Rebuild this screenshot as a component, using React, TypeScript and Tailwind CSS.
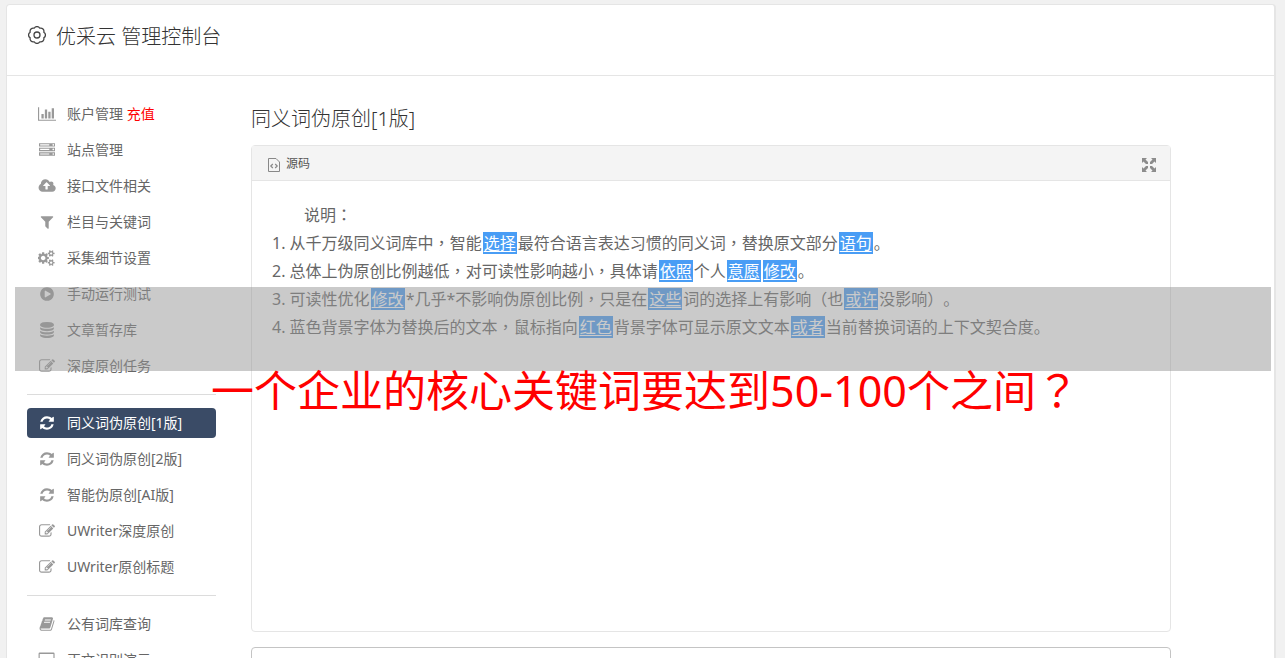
import React from "react";

interface IconShape {
  box: number;
  d: string;
}

const icons: Record<string, IconShape> = {
  chart: {
    box: 2048,
    d: "M640 896v512h-256v-512h256zm384-512v1024h-256v-1024h256zm1024 1152v128h-2048v-1536h128v1408h1920zm-640-896v768h-256v-768h256zm384-384v1152h-256v-1152h256z",
  },
  server: {
    box: 1792,
    d: "M128 1408h1024v-128h-1024v128zm0-512h1024v-128h-1024v128zm1568 448q0-40-28-68t-68-28-68 28-28 68 28 68 68 28 68-28 28-68zm-1568-960h1024v-128h-1024v128zm1568 448q0-40-28-68t-68-28-68 28-28 68 28 68 68 28 68-28 28-68zm0-512q0-40-28-68t-68-28-68 28-28 68 28 68 68 28 68-28 28-68zm96 832v384h-1792v-384h1792zm0-512v384h-1792v-384h1792zm0-512v384h-1792v-384h1792z",
  },
  cloud: {
    box: 2048,
    d: "M1344 864q0-14-9-23l-352-352q-9-9-23-9t-23 9l-351 351q-10 12-10 24 0 14 9 23t23 9h224v352q0 13 9.5 22.5t22.5 9.5h192q13 0 22.5-9.5t9.5-22.5v-352h224q13 0 22.5-9.5t9.5-22.5zm640 288q0 159-112.5 271.5t-271.5 112.5h-1088q-185 0-316.5-131.5t-131.5-316.5q0-130 70-240t188-165q-2-30-2-43 0-212 150-362t362-150q156 0 285.5 87t188.5 231q71-62 166-62 106 0 181 75t75 181q0 76-41 138 130 31 213.5 135.5t83.5 238.5z",
  },
  filter: {
    box: 1792,
    d: "M1595 295q17 41-14 70l-493 493v742q0 42-39 59-13 5-25 5-27 0-45-19l-256-256q-19-19-19-45v-486l-493-493q-31-29-14-70 17-39 59-39h1280q42 0 59 39z",
  },
  cogs: {
    box: 1920,
    d: "M832 896q0-106-75-181t-181-75-181 75-75 181 75 181 181 75 181-75 75-181zm768 512q0-52-38-90t-90-38-90 38-38 90q0 53 37.5 90.5t90.5 37.5 90.5-37.5 37.5-90.5zm0-1024q0-52-38-90t-90-38-90 38-38 90q0 53 37.5 90.5t90.5 37.5 90.5-37.5 37.5-90.5zm-384 421v185q0 10-7 19.5t-16 10.5l-155 24q-11 35-32 76 34 48 90 115 7 11 7 20 0 12-7 19-23 30-82.5 89.5t-78.5 59.5q-11 0-21-7l-115-90q-37 19-77 31-11 108-23 155-7 24-30 24h-186q-11 0-20-7.5t-10-17.5l-23-153q-34-10-75-31l-118 89q-7 7-20 7-11 0-21-8-144-133-144-160 0-9 7-19 10-14 41-53t47-61q-23-44-35-82l-152-24q-10-1-17-9.5t-7-19.5v-185q0-10 7-19.5t16-10.5l155-24q11-35 32-76-34-48-90-115-7-11-7-20 0-12 7-20 22-30 82-89t79-59q11 0 21 7l115 90q34-18 77-32 11-108 23-154 7-24 30-24h186q11 0 20 7.5t10 17.5l23 153q34 10 75 31l118-89q8-7 20-7 11 0 21 8 144 133 144 160 0 8-7 19-12 16-42 54t-45 60q23 48 34 82l152 23q10 2 17 10.5t7 19.5zm640 533v140q0 16-149 31-12 27-30 52 51 113 51 138 0 4-4 7-122 71-124 71-8 0-46-47t-52-68q-20 2-30 2t-30-2q-14 21-52 68t-46 47q-2 0-124-71-4-3-4-7 0-25 51-138-18-25-30-52-149-15-149-31v-140q0-16 149-31 13-29 30-52-51-113-51-138 0-4 4-7 4-2 35-20t59-34 30-16q8 0 46 46.5t52 67.5q20-2 30-2t30 2q51-71 92-112l6-2q4 0 124 70 4 3 4 7 0 25-51 138 17 23 30 52 149 15 149 31zm0-1024v140q0 16-149 31-12 27-30 52 51 113 51 138 0 4-4 7-122 71-124 71-8 0-46-47t-52-68q-20 2-30 2t-30-2q-14 21-52 68t-46 47q-2 0-124-71-4-3-4-7 0-25 51-138-18-25-30-52-149-15-149-31v-140q0-16 149-31 13-29 30-52-51-113-51-138 0-4 4-7 4-2 35-20t59-34 30-16q8 0 46 46.5t52 67.5q20-2 30-2t30 2q51-71 92-112l6-2q4 0 124 70 4 3 4 7 0 25-51 138 17 23 30 52 149 15 149 31z",
  },
  play: {
    box: 1792,
    d: "M896 128q209 0 385.5 103t279.5 279.5 103 385.5-103 385.5-279.5 279.5-385.5 103-385.5-103-279.5-279.5-103-385.5 103-385.5 279.5-279.5 385.5-103zm384 823q32-18 32-55t-32-55l-544-320q-31-19-64-1-32 19-32 56v640q0 37 32 56 16 8 32 8 17 0 32-9z",
  },
  database: {
    box: 1792,
    d: "M896 768q237 0 443-43t325-127v170q0 69-103 128t-280 93.5-385 34.5-385-34.5-280-93.5-103-128v-170q119 84 325 127t443 43zm0 768q237 0 443-43t325-127v170q0 69-103 128t-280 93.5-385 34.5-385-34.5-280-93.5-103-128v-170q119 84 325 127t443 43zm0-384q237 0 443-43t325-127v170q0 69-103 128t-280 93.5-385 34.5-385-34.5-280-93.5-103-128v-170q119 84 325 127t443 43zm0-1152q208 0 385 34.5t280 93.5 103 128v128q0 69-103 128t-280 93.5-385 34.5-385-34.5-280-93.5-103-128v-128q0-69 103-128t280-93.5 385-34.5z",
  },
  edit: {
    box: 1792,
    d: "M888 1184l116-116-152-152-116 116v56h96v96h56zm440-720q-16-16-33 1l-350 350q-17 17-1 33t33-1l350-350q17-17 1-33zm80 594v190q0 119-84.5 203.5t-203.5 84.5h-832q-119 0-203.5-84.5t-84.5-203.5v-832q0-119 84.5-203.5t203.5-84.5h832q63 0 117 25 15 7 18 23 3 17-9 29l-49 49q-14 14-32 8-23-6-45-6h-832q-66 0-113 47t-47 113v832q0 66 47 113t113 47h832q66 0 113-47t47-113v-126q0-13 9-22l64-64q15-15 35-7t20 29zm-96-738l288 288-672 672h-288v-288zm444 132l-92 92-288-288 92-92q28-28 68-28t68 28l152 152q28 28 28 68t-28 68z",
  },
  refresh: {
    box: 1792,
    d: "M1639 1056q0 5-1 7-64 268-268 434.5t-478 166.5q-146 0-282.5-55t-243.5-157l-129 129q-19 19-45 19t-45-19-19-45v-448q0-26 19-45t45-19h448q26 0 45 19t19 45-19 45l-137 137q71 66 161 102t187 36q134 0 250-65t186-179q11-17 53-117 8-23 30-23h192q13 0 22.5 9.5t9.5 22.5zm25-800v448q0 26-19 45t-45 19h-448q-26 0-45-19t-19-45 19-45l138-138q-148-137-349-137-134 0-250 65t-186 179q-11 17-53 117-8 23-30 23h-199q-13 0-22.5-9.5t-9.5-22.5v-7q65-268 270-434.5t480-166.5q146 0 284 55.5t245 156.5l130-129q19-19 45-19t45 19 19 45z",
  },
  book: {
    box: 1792,
    d: "M1703 478q40 57 18 129l-275 906q-19 64-76.5 107.5t-122.5 43.5h-923q-77 0-148.5-53.5t-99.5-131.5q-24-67-2-127 0-4 3-27t4-37q1-8-3-21.5t-3-19.5q2-11 8-21t16.5-23.5 16.5-23.5q23-38 45-91.5t30-91.5q3-10 .5-30t-.5-28q3-11 17-28t17-23q21-36 42-92t25-90q1-9-2.5-32t.5-28q4-13 22-30.5t22-22.5q19-26 42.5-84.5t27.5-96.5q1-8-3-25.5t-2-26.5q2-8 9-18t18-23 17-21q8-12 16.5-30.5t15-35 16-36 19.5-32 26.5-23.5 36-11.5 47.5 5.5l-1 3q38-9 51-9h761q74 0 114 56t18 130l-274 906q-36 119-71.5 153.5t-128.5 34.5h-869q-27 0-38 15-11 16-1 43 24 70 144 70h923q29 0 56-15.5t35-41.5l300-987q7-22 5-57 38 15 59 43zm-1064 2q-4 13 2 22.5t20 9.5h608q13 0 25.5-9.5t16.5-22.5l21-64q4-13-2-22.5t-20-9.5h-608q-13 0-25.5 9.5t-16.5 22.5zm-83 256q-4 13 2 22.5t20 9.5h608q13 0 25.5-9.5t16.5-22.5l21-64q4-13-2-22.5t-20-9.5h-608q-13 0-25.5 9.5t-16.5 22.5z",
  },
  screen: {
    box: 1920,
    d: "M192 64h1536q128 0 128 128v1152q0 128-128 128h-1536q-128 0-128-128v-1152q0-128 128-128zm0 160v1088h1536v-1088h-1536zM640 1600h640v128h-640z",
  },
};

const MenuIcon: React.FC<{ name: string; active?: boolean }> = ({ name, active }) => {
  const shape = icons[name];
  return (
    <span className="flex w-5 shrink-0 justify-center">
      <svg
        className={active ? "h-4 w-auto text-white" : "h-4 w-auto text-[#999]"}
        viewBox={`0 0 ${shape.box} 1792`}
        fill="currentColor"
        fillRule="evenodd"
        aria-hidden="true"
      >
        <path d={shape.d} />
      </svg>
    </span>
  );
};

interface MenuEntry {
  icon: string;
  label: string;
  extra?: string;
  active?: boolean;
}

const menuGroups: MenuEntry[][] = [
  [
    { icon: "chart", label: "账户管理", extra: "充值" },
    { icon: "server", label: "站点管理" },
    { icon: "cloud", label: "接口文件相关" },
    { icon: "filter", label: "栏目与关键词" },
    { icon: "cogs", label: "采集细节设置" },
    { icon: "play", label: "手动运行测试" },
    { icon: "database", label: "文章暂存库" },
    { icon: "edit", label: "深度原创任务" },
  ],
  [
    { icon: "refresh", label: "同义词伪原创[1版]", active: true },
    { icon: "refresh", label: "同义词伪原创[2版]" },
    { icon: "refresh", label: "智能伪原创[AI版]" },
    { icon: "edit", label: "UWriter深度原创" },
    { icon: "edit", label: "UWriter原创标题" },
  ],
  [
    { icon: "book", label: "公有词库查询" },
    { icon: "screen", label: "正文识别演示" },
  ],
];

const Sidebar: React.FC = () => (
  <nav className="w-[189px] shrink-0">
    {menuGroups.map((group, i) => (
      <ul
        key={i}
        className={
          i === 0
            ? "flex flex-col gap-1.5"
            : "mt-[13px] flex flex-col gap-1.5 border-t border-[#dcdcdc] pt-[13px]"
        }
      >
        {group.map((item) => (
          <li key={item.label}>
            <a
              href="#"
              className={
                item.active
                  ? "flex h-[30px] items-center gap-2.5 rounded bg-[#3a4b66] px-2.5 text-sm text-white"
                  : "flex h-[30px] items-center gap-2.5 px-2.5 text-sm text-[#666]"
              }
            >
              <MenuIcon name={item.icon} active={item.active} />
              <span className="whitespace-nowrap">
                {item.label}
                {item.extra && <span className="text-[#f00]"> {item.extra}</span>}
              </span>
            </a>
          </li>
        ))}
      </ul>
    ))}
  </nav>
);

const Swap: React.FC<{ children: React.ReactNode }> = ({ children }) => (
  <u className="mx-px bg-[#499df5] px-px text-white underline-offset-2">{children}</u>
);

// punctuation centred in its square
const Mark: React.FC<{ children: React.ReactNode }> = ({ children }) => (
  <span className="font-['Noto_Sans','Noto_Sans_CJK_TC',sans-serif]">{children}</span>
);

const Editor: React.FC = () => (
  <section className="rounded border border-[#e5e5e5]">
    <div className="flex h-[35px] items-center justify-between border-b border-[#e5e5e5] bg-[#f4f4f4] pt-0.5 pr-3.5 pl-4">
      <button className="flex items-center gap-1.5 text-xs text-[#555]">
        <svg className="mt-0.5 h-3.5 w-3" viewBox="0 0 12 14" fill="none" stroke="#888" aria-hidden="true">
          <path d="M.5.5h7.500l3.500 3.500v9.500h-11z" />
          <path d="M4.800 6 2.800 8l2 2M7.200 6l2 2-2 2" strokeWidth="1.200" />
        </svg>
        源码
      </button>
      <button className="pt-0.5" aria-label="全屏">
        <svg className="block h-3.5 w-3.5" viewBox="0 0 14 14" fill="#8c8c8c" aria-hidden="true">
          <path d="M0 0h5L3.500 1.500 6 4v2H4L1.500 3.500 0 5zM14 0v5l-1.500-1.500L10 6H8V4l2.500-2.500L9 0zM0 14V9l1.500 1.500L4 8h2v2l-2.500 2.500L5 14zM14 14H9l1.500-1.500L8 10V8h2l2.500 2.500L14 9z" />
        </svg>
      </button>
    </div>
    <div className="min-h-[450px] px-5 py-5 text-base leading-7 text-[#666]">
      <p className="indent-8">
        说明<Mark>：</Mark>
      </p>
      <p>
        1. 从千万级同义词库中<Mark>，</Mark>智能<Swap>选择</Swap>最符合语言表达习惯的同义词
        <Mark>，</Mark>替换原文部分<Swap>语句</Swap>。
      </p>
      <p>
        2. 总体上伪原创比例越低<Mark>，</Mark>对可读性影响越小<Mark>，</Mark>具体请
        <Swap>依照</Swap>个人<Swap>意愿</Swap>
        <Swap>修改</Swap>。
      </p>
      <p>
        3. 可读性优化<Swap>修改</Swap>*几乎*不影响伪原创比例<Mark>，</Mark>只是在
        <Swap>这些</Swap>词的选择上有影响（也<Swap>或许</Swap>没影响）。
      </p>
      <p>
        4. 蓝色背景字体为替换后的文本<Mark>，</Mark>鼠标指向<Swap>红色</Swap>
        背景字体可显示原文文本<Swap>或者</Swap>当前替换词语的上下文契合度。
      </p>
    </div>
  </section>
);

const App: React.FC = () => {
  return (
    <div className="relative h-screen overflow-hidden bg-[#f1f1f1] pt-1 pr-[9px] pl-1.5 font-['Noto_Sans','Noto_Sans_CJK_SC',sans-serif] [text-spacing-trim:space-all]">
      <div className="min-h-full rounded-t border-t border-r-2 border-l border-[#e5e5e5] bg-white">
        <header className="flex h-[71px] items-start gap-2.5 border-b border-[#e5e5e5] pt-[17px] pr-5 pl-[21px] text-[#333]">
          <svg className="mt-1 h-[18px] w-[18px]" viewBox="1 1 18 18" fill="none" stroke="#444" strokeWidth="1.300" aria-hidden="true">
            <path
              d="M16.800 7.200A3.200 3.200 0 0 1 16.800 12.800A3.200 3.200 0 0 1 12.800 16.800A3.200 3.200 0 0 1 7.200 16.800A3.200 3.200 0 0 1 3.200 12.800A3.200 3.200 0 0 1 3.200 7.200A3.200 3.200 0 0 1 7.200 3.200A3.200 3.200 0 0 1 12.800 3.200A3.200 3.200 0 0 1 16.800 7.200z"
              strokeLinejoin="round"
            />
            <circle cx="10" cy="10" r="3" />
          </svg>
          <h1 className="text-xl leading-[30px] font-light">优采云 管理控制台</h1>
        </header>
        <div className="flex gap-[35px] pt-[23px] pr-[103px] pl-5">
          <Sidebar />
          <main className="min-w-0 flex-1">
            <h2 className="mt-[5px] mb-[11px] text-xl leading-[30px] font-light text-[#333]">
              同义词伪原创[1版]
            </h2>
            <Editor />
            <textarea
              aria-label="原文"
              className="mt-[15px] block h-40 w-full resize-none rounded border border-[#c4c4c4] p-2"
            />
          </main>
        </div>
      </div>

      {/* caption band laid over the console */}
      <div className="absolute top-[287px] right-3.5 left-[15px]">
        <div className="h-[84px] bg-[#969696]/50" />
        <p className="pl-1 text-center text-[43px] leading-10 whitespace-nowrap text-[#f00]">
          一个企业的核心关键词要达到50-100个之间<Mark>？</Mark>
        </p>
      </div>
    </div>
  );
};

export default App;
